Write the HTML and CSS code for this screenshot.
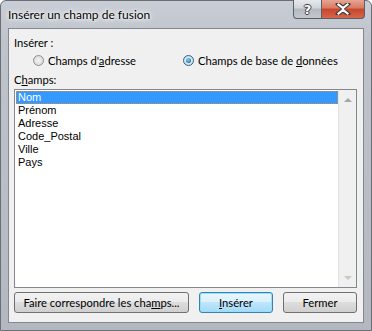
FILE: index.html
```html
<!DOCTYPE html>
<html lang="fr">
<head>
  <meta charset="UTF-8">
  <title>Insérer un champ de fusion</title>
  <link rel="stylesheet" href="styles.css">
</head>
<body>
  <div class="fenetre">
    <!-- BARRE DE TITRE -->
    <div class="barre-titre">
      <span class="titre">Insérer un champ de fusion</span>
      <div class="boutons-titre">
        <div class="btn-aide">?</div>
        <div class="btn-fermer">
          <svg width="18" height="12" viewBox="0 0 18 12">
            <path d="M4 1 L9 5 L14 1 M4 11 L9 7 L14 11 M9 5 L9 7" stroke="#3b3b3b" stroke-width="4.2" fill="none" stroke-linecap="square"/>
            <path d="M4.5 1.5 L9 5 L13.5 1.5 M4.5 10.5 L9 7 L13.5 10.5 M9 5 L9 7" stroke="#ffffff" stroke-width="2.2" fill="none" stroke-linecap="square"/>
          </svg>
        </div>
      </div>
    </div>

    <!-- ZONE CLIENT -->
    <div class="client">
      <div class="libelle">Insérer :</div>
      <div class="ligne-radios">
        <label class="radio"><span class="rond"></span><span>Champs d'<u>a</u>dresse</span></label>
        <label class="radio"><span class="rond actif"></span><span>Champs de base de <u>d</u>onnées</span></label>
      </div>
      <div class="libelle">C<u>h</u>amps:</div>

      <div class="liste">
        <div class="elements">
          <div class="element choisi">Nom</div>
          <div class="element">Prénom</div>
          <div class="element">Adresse</div>
          <div class="element">Code_Postal</div>
          <div class="element">Ville</div>
          <div class="element">Pays</div>
        </div>
        <div class="defilement">
          <span class="fleche-haut"></span>
          <span class="fleche-bas"></span>
        </div>
      </div>

      <div class="ligne-boutons">
        <button class="btn btn-large">Faire correspondre les cha<u>m</u>ps...</button>
        <button class="btn btn-defaut"><u>I</u>nsérer</button>
        <button class="btn">Fermer</button>
      </div>
    </div>
  </div>
</body>
</html>
```

FILE: styles.css
```css
body {
  margin: 0;
  padding: 0;
  background-color: #ffffff;
}

.fenetre {
  width: 372px;
  height: 331px;
  box-sizing: border-box;
  background: linear-gradient(to bottom, #c9ced6 0px, #bfc4cc 40px, #b3b8c0 331px);
  border: 1px solid #6b6f75;
  border-radius: 6px 6px 0 0;
  display: flex;
  flex-direction: column;
  font-family: 'Lato', 'Noto Sans', sans-serif;
}

.barre-titre {
  height: 28px;
  display: flex;
  align-items: flex-start;
  justify-content: space-between;
}

.titre {
  margin-top: 6px;
  margin-left: 7px;
  font-size: 12px;
  color: #000;
  white-space: nowrap;
  text-shadow: 0 0 8px #ffffff, 0 0 4px #ffffff, 0 0 2px #ffffff;
}

.boutons-titre {
  display: flex;
  margin-top: -1px;
  margin-right: 6px;
}

.btn-aide,
.btn-fermer {
  height: 19px;
  box-sizing: border-box;
  border: 1px solid #5c6066;
  border-top: none;
  display: flex;
  align-items: center;
  justify-content: center;
}

.btn-aide {
  width: 28px;
  border-right: none;
  border-radius: 0 0 0 4px;
  background: linear-gradient(to bottom, #e6e8eb 0%, #cfd3d8 45%, #b4b9c0 50%, #c4c8ce 100%);
  color: #fff;
  font-family: 'DejaVu Sans', sans-serif;
  font-weight: bold;
  font-size: 13px;
  text-shadow: 1px 0 0 #3b3b3b, -1px 0 0 #3b3b3b, 0 1px 0 #3b3b3b, 0 -1px 0 #3b3b3b;
}

.btn-fermer {
  width: 44px;
  border-radius: 0 0 4px 0;
  background: linear-gradient(to bottom, #e8a493 0%, #d77a63 45%, #c7452c 50%, #d5664c 100%);
}

.client {
  flex: 1;
  margin: 0 7px 7px 7px;
  background-color: #f0f0f0;
  border: 1px solid #84888e;
  display: flex;
  flex-direction: column;
  padding: 5px 6px 9px 5px;
  font-size: 11.2px;
  color: #000;
}

.libelle {
  height: 16px;
  line-height: 17px;
  white-space: nowrap;
}

.ligne-radios {
  display: flex;
  height: 20px;
  align-items: center;
  padding-left: 19px;
  margin-bottom: 1px;
  white-space: nowrap;
}

.radio {
  display: flex;
  align-items: center;
  gap: 4px;
  width: 150px;
}

.rond {
  width: 11px;
  height: 11px;
  border-radius: 50%;
  border: 1px solid #8e8f8f;
  background: radial-gradient(circle at 50% 50%, #f4f4f4 0%, #dcdcdc 70%, #cfcfcf 100%);
  box-sizing: border-box;
  display: flex;
  align-items: center;
  justify-content: center;
  flex-shrink: 0;
}

.rond.actif {
  border-color: #2c628b;
}

.rond.actif::after {
  content: "";
  width: 5px;
  height: 5px;
  border-radius: 50%;
  background: radial-gradient(circle at 40% 35%, #8ad7f7 0%, #1e8ad3 60%, #0d4f88 100%);
}

.liste {
  margin-top: 2px;
  height: 199px;
  box-sizing: border-box;
  border: 1px solid #828790;
  background-color: #ffffff;
  display: flex;
}

.elements {
  flex: 1;
  padding: 1px 0 0 1px;
  font-family: 'Liberation Sans', Arial, sans-serif;
  font-size: 11px;
}

.element {
  height: 13px;
  line-height: 13px;
  padding-left: 2px;
}

.element.choisi {
  background-color: #3399ff;
  color: #ffffff;
  outline: 1px dotted #d98a33;
  outline-offset: -1px;
}

.defilement {
  width: 17px;
  background-color: #f0f0f0;
  border-left: 1px solid #e4e4e4;
  display: flex;
  flex-direction: column;
  justify-content: space-between;
  align-items: center;
  padding: 8px 0 7px 0;
}

.fleche-haut {
  width: 0;
  height: 0;
  border-left: 4px solid transparent;
  border-right: 4px solid transparent;
  border-bottom: 4px solid #a8a8a8;
}

.fleche-bas {
  width: 0;
  height: 0;
  border-left: 4px solid transparent;
  border-right: 4px solid transparent;
  border-top: 4px solid #c8c8c8;
}

.ligne-boutons {
  display: flex;
  margin-top: 4px;
  gap: 10px;
}

.btn {
  height: 21px;
  width: 74px;
  padding: 0;
  font-family: 'Lato', 'Noto Sans', sans-serif;
  font-size: 11.2px;
  white-space: nowrap;
  color: #000;
  border: 1px solid #707070;
  border-radius: 3px;
  background: linear-gradient(to bottom, #f2f2f2 0%, #ebebeb 49%, #dddddd 50%, #cfcfcf 100%);
}

.btn-large {
  width: 175px;
}

.btn-defaut {
  border-color: #3c7fb1;
  box-shadow: inset 0 0 0 1px #8fe2fb;
  background: linear-gradient(to bottom, #eaf6fd 0%, #d9f0fc 49%, #bee6fd 50%, #a7d9f5 100%);
}
```
